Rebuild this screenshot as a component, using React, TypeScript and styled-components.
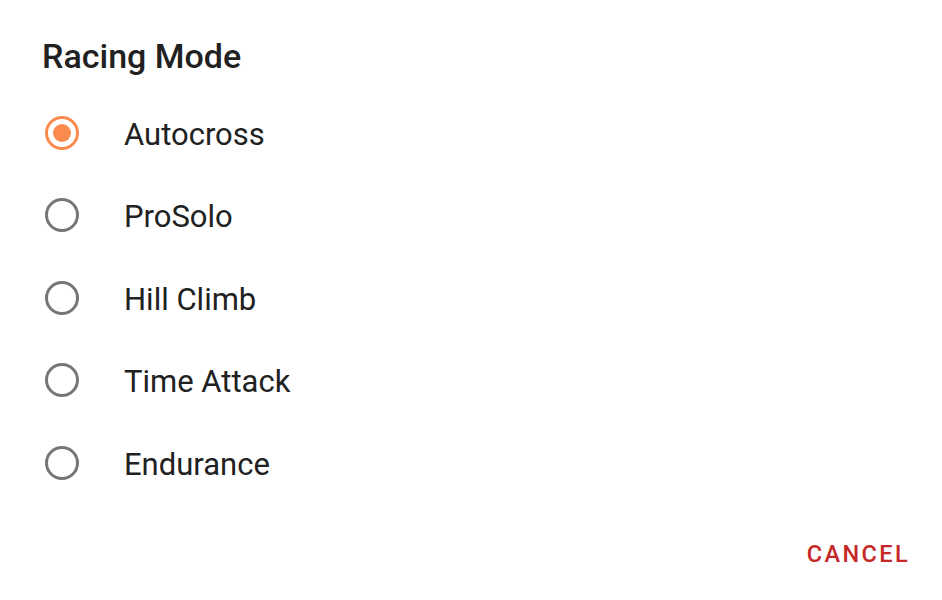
import React, { useState } from "react";
import styled, { createGlobalStyle } from "styled-components";

const Global = createGlobalStyle`
  html, body { margin: 0; padding: 0; background: #ffffff; }
  body { font-family: Roboto, "Noto Sans", "Liberation Sans", sans-serif; }
  * { box-sizing: border-box; }
`;

const Dialog = styled.div`
  width: 942px;
  height: 600px;
  background: #ffffff;
  display: flex;
  flex-direction: column;
  border-radius: 3px;
  overflow: hidden;
`;

const Title = styled.h2`
  margin: 0;
  padding: 36.3px 0 0 42px;
  font-size: 34px;
  line-height: 40px;
  font-weight: 500;
  color: #212121;
`;

const List = styled.div`
  display: flex;
  flex-direction: column;
  margin-top: 15.45px;
`;

const Row = styled.label`
  display: flex;
  align-items: center;
  height: 82.5px;
  padding-left: 45px;
  cursor: pointer;
`;

const Radio = styled.span<{ $checked: boolean }>`
  width: 34px;
  height: 34px;
  border-radius: 50%;
  border: 3px solid ${(p) => (p.$checked ? "#FB8A4E" : "#767676")};
  flex: none;
  display: flex;
  align-items: center;
  justify-content: center;
  &::after {
    content: "";
    width: 18px;
    height: 18px;
    border-radius: 50%;
    background: #FB8A4E;
    display: ${(p) => (p.$checked ? "block" : "none")};
  }
`;

const Label = styled.span`
  margin-left: 45px;
  padding-top: 3px;
  font-size: 31px;
  font-weight: 400;
  color: #212121;
`;

const Actions = styled.div`
  margin-top: auto;
  display: flex;
  justify-content: flex-end;
  padding: 0 22px 20px 0;
`;

const Button = styled.button`
  background: none;
  border: none;
  font-family: inherit;
  font-size: 23.5px;
  font-weight: 500;
  letter-spacing: 2.4px;
  color: #C62828;
  padding: 12px 10px 12px 10px;
  cursor: pointer;
`;

const options = ["Autocross", "ProSolo", "Hill Climb", "Time Attack", "Endurance"];

export default function App() {
  const [selected, setSelected] = useState(0);
  return (
    <>
      <Global />
      <Dialog>
        <Title>Racing Mode</Title>
        <List>
          {options.map((o, i) => (
            <Row key={o} onClick={() => setSelected(i)}>
              <Radio $checked={selected === i} />
              <Label>{o}</Label>
            </Row>
          ))}
        </List>
        <Actions>
          <Button>CANCEL</Button>
        </Actions>
      </Dialog>
    </>
  );
}
